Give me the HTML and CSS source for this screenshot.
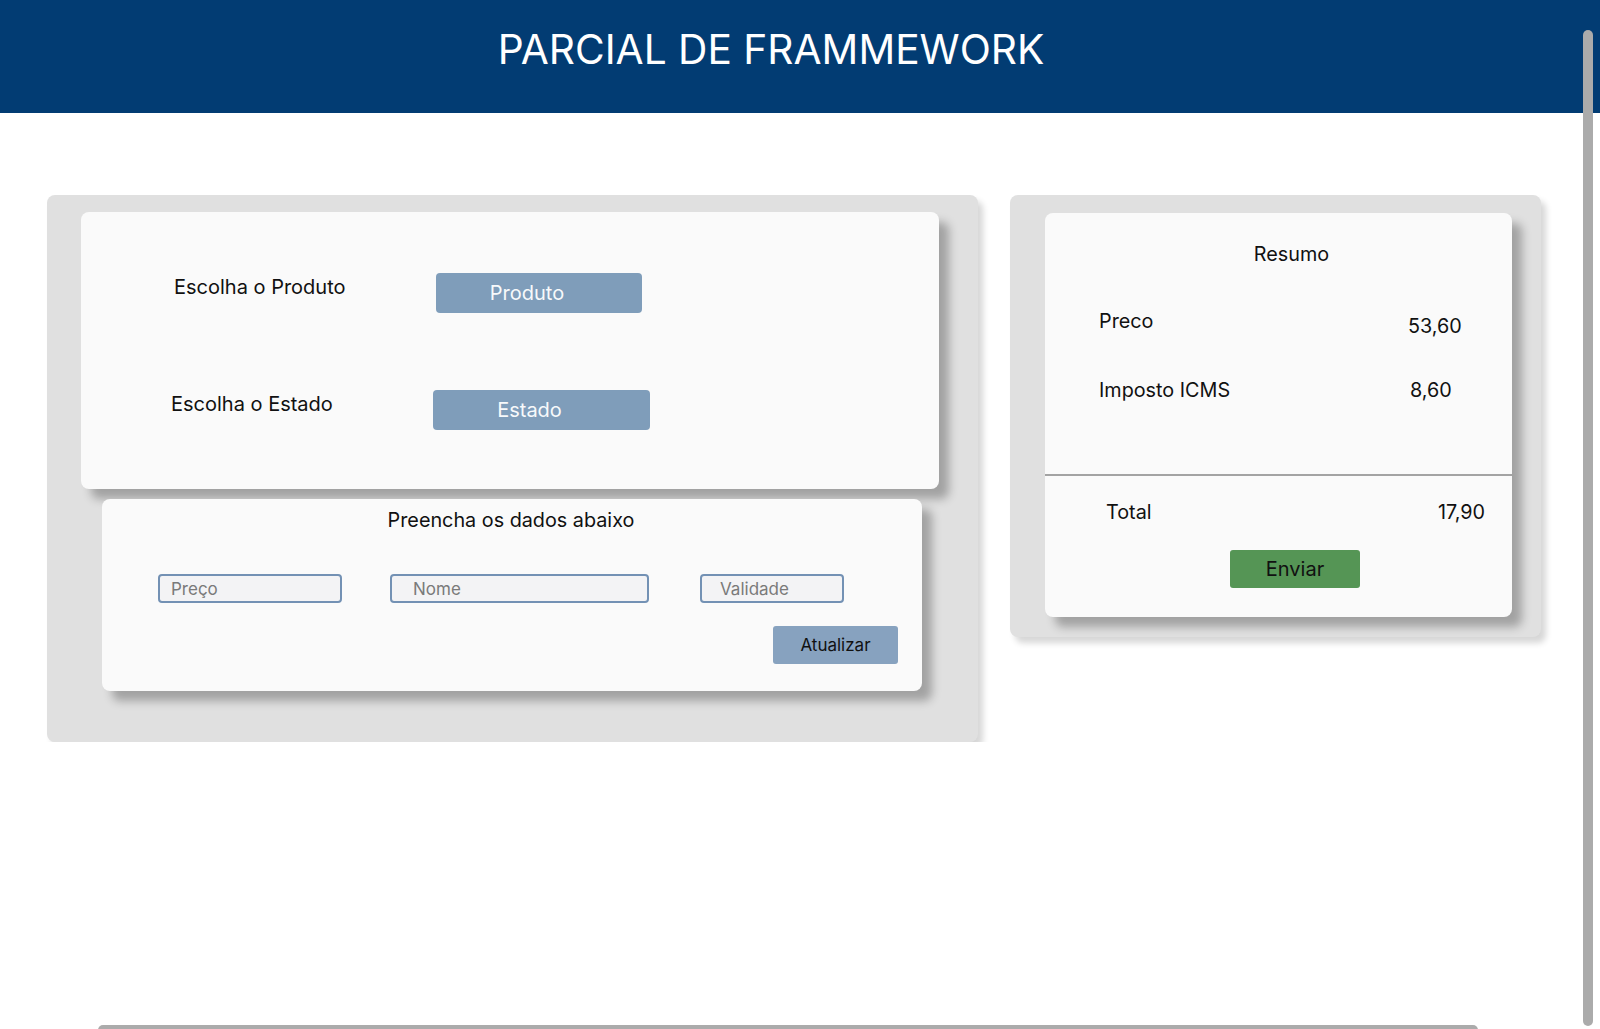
FILE: index.html
```html
<!DOCTYPE html>
<html lang="pt-BR">
<head>
<meta charset="utf-8">
<title>Parcial de Frammework</title>
<link rel="stylesheet" href="styles.css">
</head>
<body>
<header class="topbar">
  <h1 class="topbar-title">PARCIAL DE FRAMMEWORK</h1>
</header>
<main class="content">
  <section class="panel panel-left">
    <div class="card card-select">
      <div class="select-row">
        <span class="select-label">Escolha o Produto</span>
        <button class="btn-select btn-produto">Produto</button>
      </div>
      <div class="select-row row-estado">
        <span class="select-label">Escolha o Estado</span>
        <button class="btn-select btn-estado">Estado</button>
      </div>
    </div>
    <div class="card card-form">
      <p class="form-title">Preencha os dados abaixo</p>
      <div class="form-inputs">
        <input class="field field-preco" type="text" placeholder="Preço">
        <input class="field field-nome" type="text" placeholder="Nome">
        <input class="field field-validade" type="text" placeholder="Validade">
      </div>
      <div class="form-actions">
        <button class="btn-update">Atualizar</button>
      </div>
    </div>
  </section>
  <section class="panel panel-right">
    <div class="card card-summary">
      <p class="summary-title">Resumo</p>
      <div class="summary-row row-preco">
        <span class="summary-label">Preco</span>
        <span class="summary-value value-preco">53,60</span>
      </div>
      <div class="summary-row row-icms">
        <span class="summary-label">Imposto ICMS</span>
        <span class="summary-value value-icms">8,60</span>
      </div>
      <hr class="summary-divider">
      <div class="summary-row row-total">
        <span class="summary-label label-total">Total</span>
        <span class="summary-value value-total">17,90</span>
      </div>
      <button class="btn-send">Enviar</button>
    </div>
  </section>
</main>
<div class="scroll-v"></div>
<div class="scroll-h"></div>
</body>
</html>
```

FILE: styles.css
```css
* { box-sizing: border-box; }

html, body {
  margin: 0;
  padding: 0;
  background: #ffffff;
  font-family: Inter, "Noto Sans", "Liberation Sans", sans-serif;
  color: #111111;
  overflow: hidden;
}

.topbar {
  height: 113px;
  background: #023c73;
  padding-top: 29px;
  padding-right: 58px;
  text-align: center;
}

.topbar-title {
  margin: 0;
  font-size: 40.7px;
  line-height: 42px;
  font-weight: 400;
  color: #ffffff;
}

.content {
  display: flex;
  align-items: flex-start;
  gap: 32px;
  padding: 82px 0 0 47px;
}

.panel {
  background: #e0e0e0;
  border-radius: 8px;
  box-shadow: 5px 6px 6px rgba(0, 0, 0, 0.16);
}

.panel-left {
  width: 931px;
  height: 547px;
  padding: 17px 39px 0 34px;
}

.panel-right {
  width: 531px;
  height: 442px;
  padding: 18px 29px 0 35px;
}

.card {
  background: #fafafa;
  border-radius: 8px;
  box-shadow: 10px 10px 10px rgba(0, 0, 0, 0.28);
}

/* Card 1: selects */
.card-select {
  height: 277px;
  padding: 61px 0 0 93px;
  display: flex;
  flex-direction: column;
  gap: 77px;
}

.select-row {
  display: flex;
  align-items: flex-start;
  height: 40px;
}

.row-estado { margin-left: -3px; }

.select-label {
  width: 262px;
  font-size: 20px;
  line-height: 24px;
  margin-top: 2px;
}

.btn-select {
  height: 40px;
  border: none;
  border-radius: 4px;
  background: #7f9dba;
  color: #f7f9fb;
  font-family: inherit;
  font-size: 20px;
  padding: 0 24px 0 0;
  text-align: center;
}

.btn-produto { width: 206px; }
.btn-estado { width: 217px; }

/* Card 2: form */
.card-form {
  height: 192px;
  margin: 10px 17px 0 21px;
  padding: 9px 24px 0 56px;
}

.form-title {
  margin: 0 0 42px -34px;
  text-align: center;
  font-size: 19.8px;
  line-height: 24px;
}

.form-inputs {
  display: flex;
  align-items: center;
  height: 29px;
}

.field {
  height: 29px;
  border: 2px solid #7391b4;
  border-radius: 4px;
  background: #f3f3f5;
  font-family: inherit;
  font-size: 17px;
  color: #333;
  padding: 0 0 0 11px;
  outline: none;
}

.field::placeholder { color: #7a7a7a; }

.field-preco { width: 184px; }
.field-nome { width: 259px; margin-left: 48px; padding-left: 21px; }
.field-validade { width: 144px; margin-left: 51px; padding-left: 18px; }

.form-actions {
  display: flex;
  justify-content: flex-end;
  margin-top: 23px;
}

.btn-update {
  width: 125px;
  height: 38px;
  border: none;
  border-radius: 3px;
  background: #87a2bf;
  color: #111;
  font-family: inherit;
  font-size: 17px;
}

/* Summary */
.card-summary {
  height: 404px;
  padding-top: 29px;
}

.summary-title {
  margin: 0;
  padding-left: 26px;
  text-align: center;
  font-size: 19.8px;
  line-height: 24px;
}

.summary-row {
  display: flex;
  align-items: flex-start;
  font-size: 19.8px;
  line-height: 24px;
  padding-left: 54px;
}

.summary-label { width: 309px; }

.row-preco { margin-top: 43px; }
.value-preco { padding-top: 5px; }

.row-icms { margin-top: 40px; }
.value-icms { margin-left: 2px; }

.summary-divider {
  margin: 72px 0 0 0;
  border: none;
  height: 2px;
  background: #a3a3a3;
}

.row-total {
  margin-top: 24px;
  padding-left: 61px;
}

.label-total { width: 332px; }

.btn-send {
  display: block;
  width: 130px;
  height: 38px;
  margin: 26px 0 0 185px;
  border: none;
  border-radius: 3px;
  background: #559555;
  color: #111;
  font-family: inherit;
  font-size: 20px;
}

/* overlay scrollbars */
.scroll-v {
  position: fixed;
  left: 1583px;
  top: 30px;
  width: 10px;
  height: 996px;
  background: #ababab;
  border-radius: 5px;
}

.scroll-h {
  position: fixed;
  left: 98px;
  top: 1025px;
  width: 1380px;
  height: 10px;
  background: #ababab;
  border-radius: 5px;
}
```
